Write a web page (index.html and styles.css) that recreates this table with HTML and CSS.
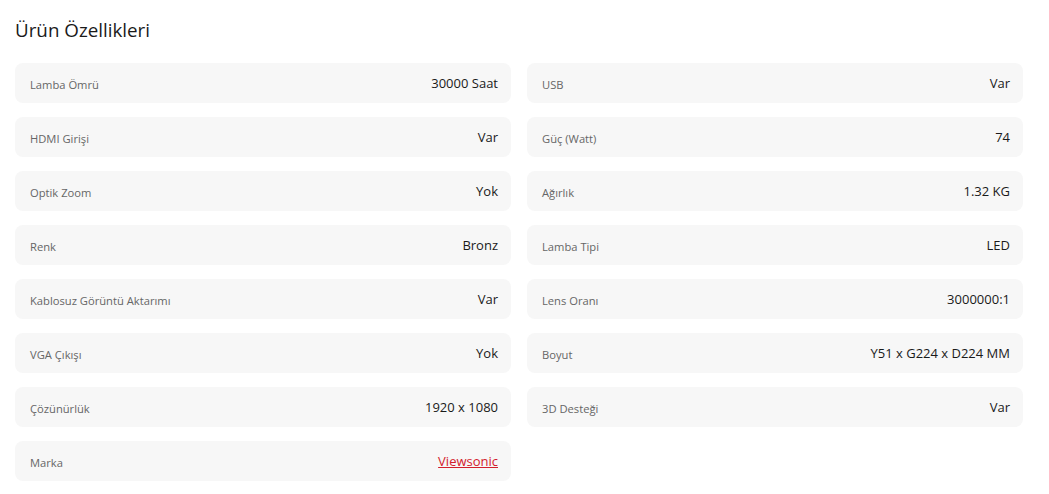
FILE: index.html
```html
<!DOCTYPE html>
<html lang="tr">
<head>
<meta charset="utf-8">
<title>Ürün Özellikleri</title>
<link rel="stylesheet" href="styles.css">
</head>
<body>
<section class="specs">
  <h2 class="specs-title">Ürün Özellikleri</h2>
  <div class="specs-grid">
    <div class="spec"><span class="spec-label">Lamba Ömrü</span><span class="spec-value">30000 Saat</span></div>
    <div class="spec"><span class="spec-label">USB</span><span class="spec-value">Var</span></div>
    <div class="spec"><span class="spec-label">HDMI Girişi</span><span class="spec-value">Var</span></div>
    <div class="spec"><span class="spec-label">Güç (Watt)</span><span class="spec-value">74</span></div>
    <div class="spec"><span class="spec-label">Optik Zoom</span><span class="spec-value">Yok</span></div>
    <div class="spec"><span class="spec-label">Ağırlık</span><span class="spec-value">1.32 KG</span></div>
    <div class="spec"><span class="spec-label">Renk</span><span class="spec-value">Bronz</span></div>
    <div class="spec"><span class="spec-label">Lamba Tipi</span><span class="spec-value">LED</span></div>
    <div class="spec"><span class="spec-label">Kablosuz Görüntü Aktarımı</span><span class="spec-value">Var</span></div>
    <div class="spec"><span class="spec-label">Lens Oranı</span><span class="spec-value">3000000:1</span></div>
    <div class="spec"><span class="spec-label">VGA Çıkışı</span><span class="spec-value">Yok</span></div>
    <div class="spec"><span class="spec-label">Boyut</span><span class="spec-value">Y51 x G224 x D224 MM</span></div>
    <div class="spec"><span class="spec-label">Çözünürlük</span><span class="spec-value">1920 x 1080</span></div>
    <div class="spec"><span class="spec-label">3D Desteği</span><span class="spec-value">Var</span></div>
    <div class="spec"><span class="spec-label">Marka</span><a class="spec-value spec-link" href="#">Viewsonic</a></div>
  </div>
</section>
</body>
</html>
```
FILE: styles.css
```css
html, body {
  margin: 0;
  padding: 0;
  background: #ffffff;
}

body {
  font-family: "Open Sans", "Noto Sans", sans-serif;
  color: #222222;
}

.specs {
  width: 1008px;
  padding: 17px 0 0 15px;
}

.specs-title {
  margin: 0 0 20px;
  font-size: 18.8px;
  font-weight: 400;
  line-height: 26px;
  color: #1a1a1a;
}

.specs-grid {
  display: grid;
  grid-template-columns: 1fr 1fr;
  column-gap: 16px;
  row-gap: 14px;
}

.spec {
  display: flex;
  align-items: center;
  justify-content: space-between;
  height: 40px;
  box-sizing: border-box;
  padding: 0 13px 0 15px;
  background: #f7f7f7;
  border-radius: 8px;
}

.spec-label {
  font-size: 11.2px;
  color: #666666;
  padding-top: 2px;
}

.spec-value {
  font-size: 13px;
  color: #1a1a1a;
  padding-bottom: 1px;
}

.spec-link {
  color: #d3202c;
  text-decoration: underline;
}
```
